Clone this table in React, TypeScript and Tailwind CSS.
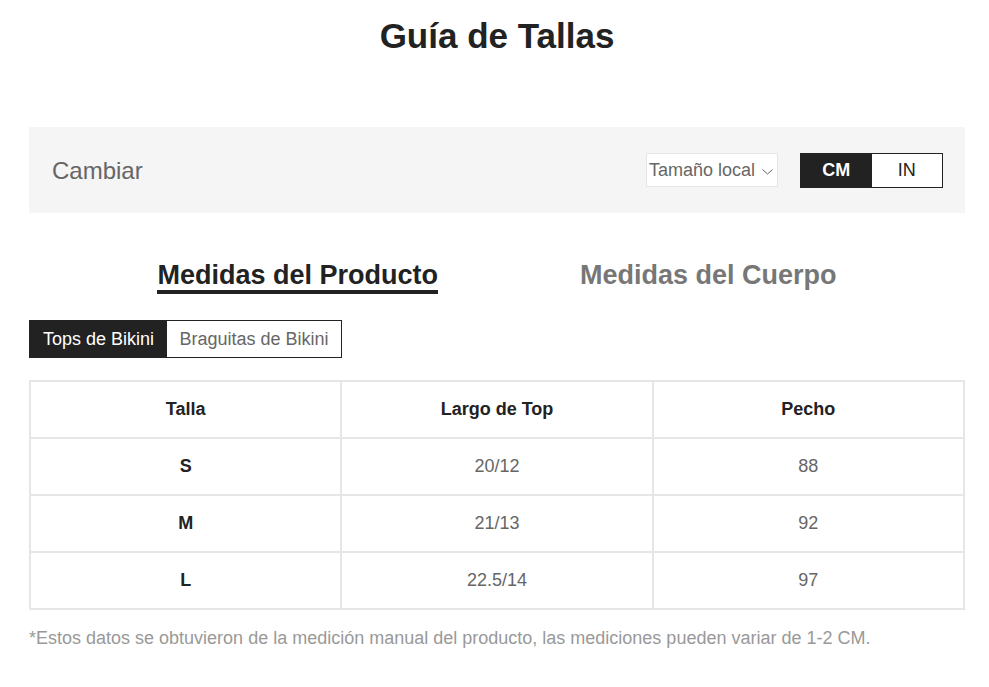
import { useState } from "react";

const rows = [
  { size: "S", top: "20/12", chest: "88" },
  { size: "M", top: "21/13", chest: "92" },
  { size: "L", top: "22.5/14", chest: "97" },
];

export default function App() {
  const [unit, setUnit] = useState("CM");
  const [tab, setTab] = useState("producto");
  const [part, setPart] = useState("tops");

  return (
    <div className="min-h-screen bg-white font-['Liberation_Sans',Arial,sans-serif] text-[#222]">
      <div className="ml-[29px] w-[936px]">
        <h1 className="pt-[19px] text-center text-[35px] font-bold leading-[34px] text-[#222]">
          Guía de Tallas
        </h1>

        {/* unit bar */}
        <div className="mt-[74px] flex h-[86px] items-center justify-between bg-[#f5f5f5] pl-[23px] pr-[22px]">
          <span className="mt-[2px] text-[24px] text-[#666]">Cambiar</span>
          <div className="flex items-center gap-[22px]">
            <button className="flex h-[34px] w-[132px] items-center gap-[7px] border border-[#e5e5e5] bg-white pl-[2px] text-[18px] text-[#666]">
              Tamaño local
              <svg width="11" height="6" viewBox="0 0 11 6" className="mt-[3px]">
                <polyline points="0.5,0.5 5.5,5 10.5,0.5" fill="none" stroke="#666" strokeWidth="1" />
              </svg>
            </button>
            <div className="flex h-[35px] w-[143px] border border-[#222]">
              {["CM", "IN"].map((u) => (
                <button
                  key={u}
                  onClick={() => setUnit(u)}
                  className={
                    unit === u
                      ? "flex-1 bg-[#222] text-[18px] font-bold text-white"
                      : "flex-1 bg-white text-[18px] text-[#222]"
                  }
                >
                  {u}
                </button>
              ))}
            </div>
          </div>
        </div>

        {/* main tabs */}
        <div className="mt-[49px] flex justify-center gap-[142px]">
          <button
            onClick={() => setTab("producto")}
            className={
              tab === "producto"
                ? "border-b-4 border-[#222] pb-[1px] text-[27px] font-bold leading-[27px] text-[#222]"
                : "border-b-4 border-transparent pb-[1px] text-[27px] font-bold leading-[27px] text-[#777]"
            }
          >
            Medidas del Producto
          </button>
          <button
            onClick={() => setTab("cuerpo")}
            className={
              tab === "cuerpo"
                ? "border-b-4 border-[#222] pb-[1px] text-[27px] font-bold leading-[27px] text-[#222]"
                : "border-b-4 border-transparent pb-[1px] text-[27px] font-bold leading-[27px] text-[#777]"
            }
          >
            Medidas del Cuerpo
          </button>
        </div>

        {/* part tabs */}
        <div className="mt-[26px] flex h-[38px] w-fit border border-[#222]">
          <button
            onClick={() => setPart("tops")}
            className={
              part === "tops"
                ? "w-[137px] bg-[#222] text-[18px] text-white"
                : "w-[137px] bg-white text-[18px] text-[#666]"
            }
          >
            Tops de Bikini
          </button>
          <button
            onClick={() => setPart("braguitas")}
            className={
              part === "braguitas"
                ? "w-[174px] bg-[#222] text-[18px] text-white"
                : "w-[174px] bg-white text-[18px] text-[#666]"
            }
          >
            Braguitas de Bikini
          </button>
        </div>

        {/* size table */}
        <div className="mt-[22px] grid grid-cols-3 gap-[2px] bg-[#e6e6e6] p-[2px]">
          {["Talla", "Largo de Top", "Pecho"].map((h) => (
            <div key={h} className="flex h-[55px] items-center justify-center bg-white text-[18px] font-bold text-[#222]">
              {h}
            </div>
          ))}
          {rows.map((r) => (
            <>
              <div key={r.size + "a"} className="flex h-[55px] items-center justify-center bg-white text-[18px] font-bold text-[#222]">
                {r.size}
              </div>
              <div key={r.size + "b"} className="flex h-[55px] items-center justify-center bg-white text-[18px] text-[#666]">
                {r.top}
              </div>
              <div key={r.size + "c"} className="flex h-[55px] items-center justify-center bg-white text-[18px] text-[#666]">
                {r.chest}
              </div>
            </>
          ))}
        </div>

        <p className="mt-[18px] text-[18px] leading-[20px] text-[#999]">
          *Estos datos se obtuvieron de la medición manual del producto, las mediciones pueden variar de 1-2 CM.
        </p>
      </div>
    </div>
  );
}
